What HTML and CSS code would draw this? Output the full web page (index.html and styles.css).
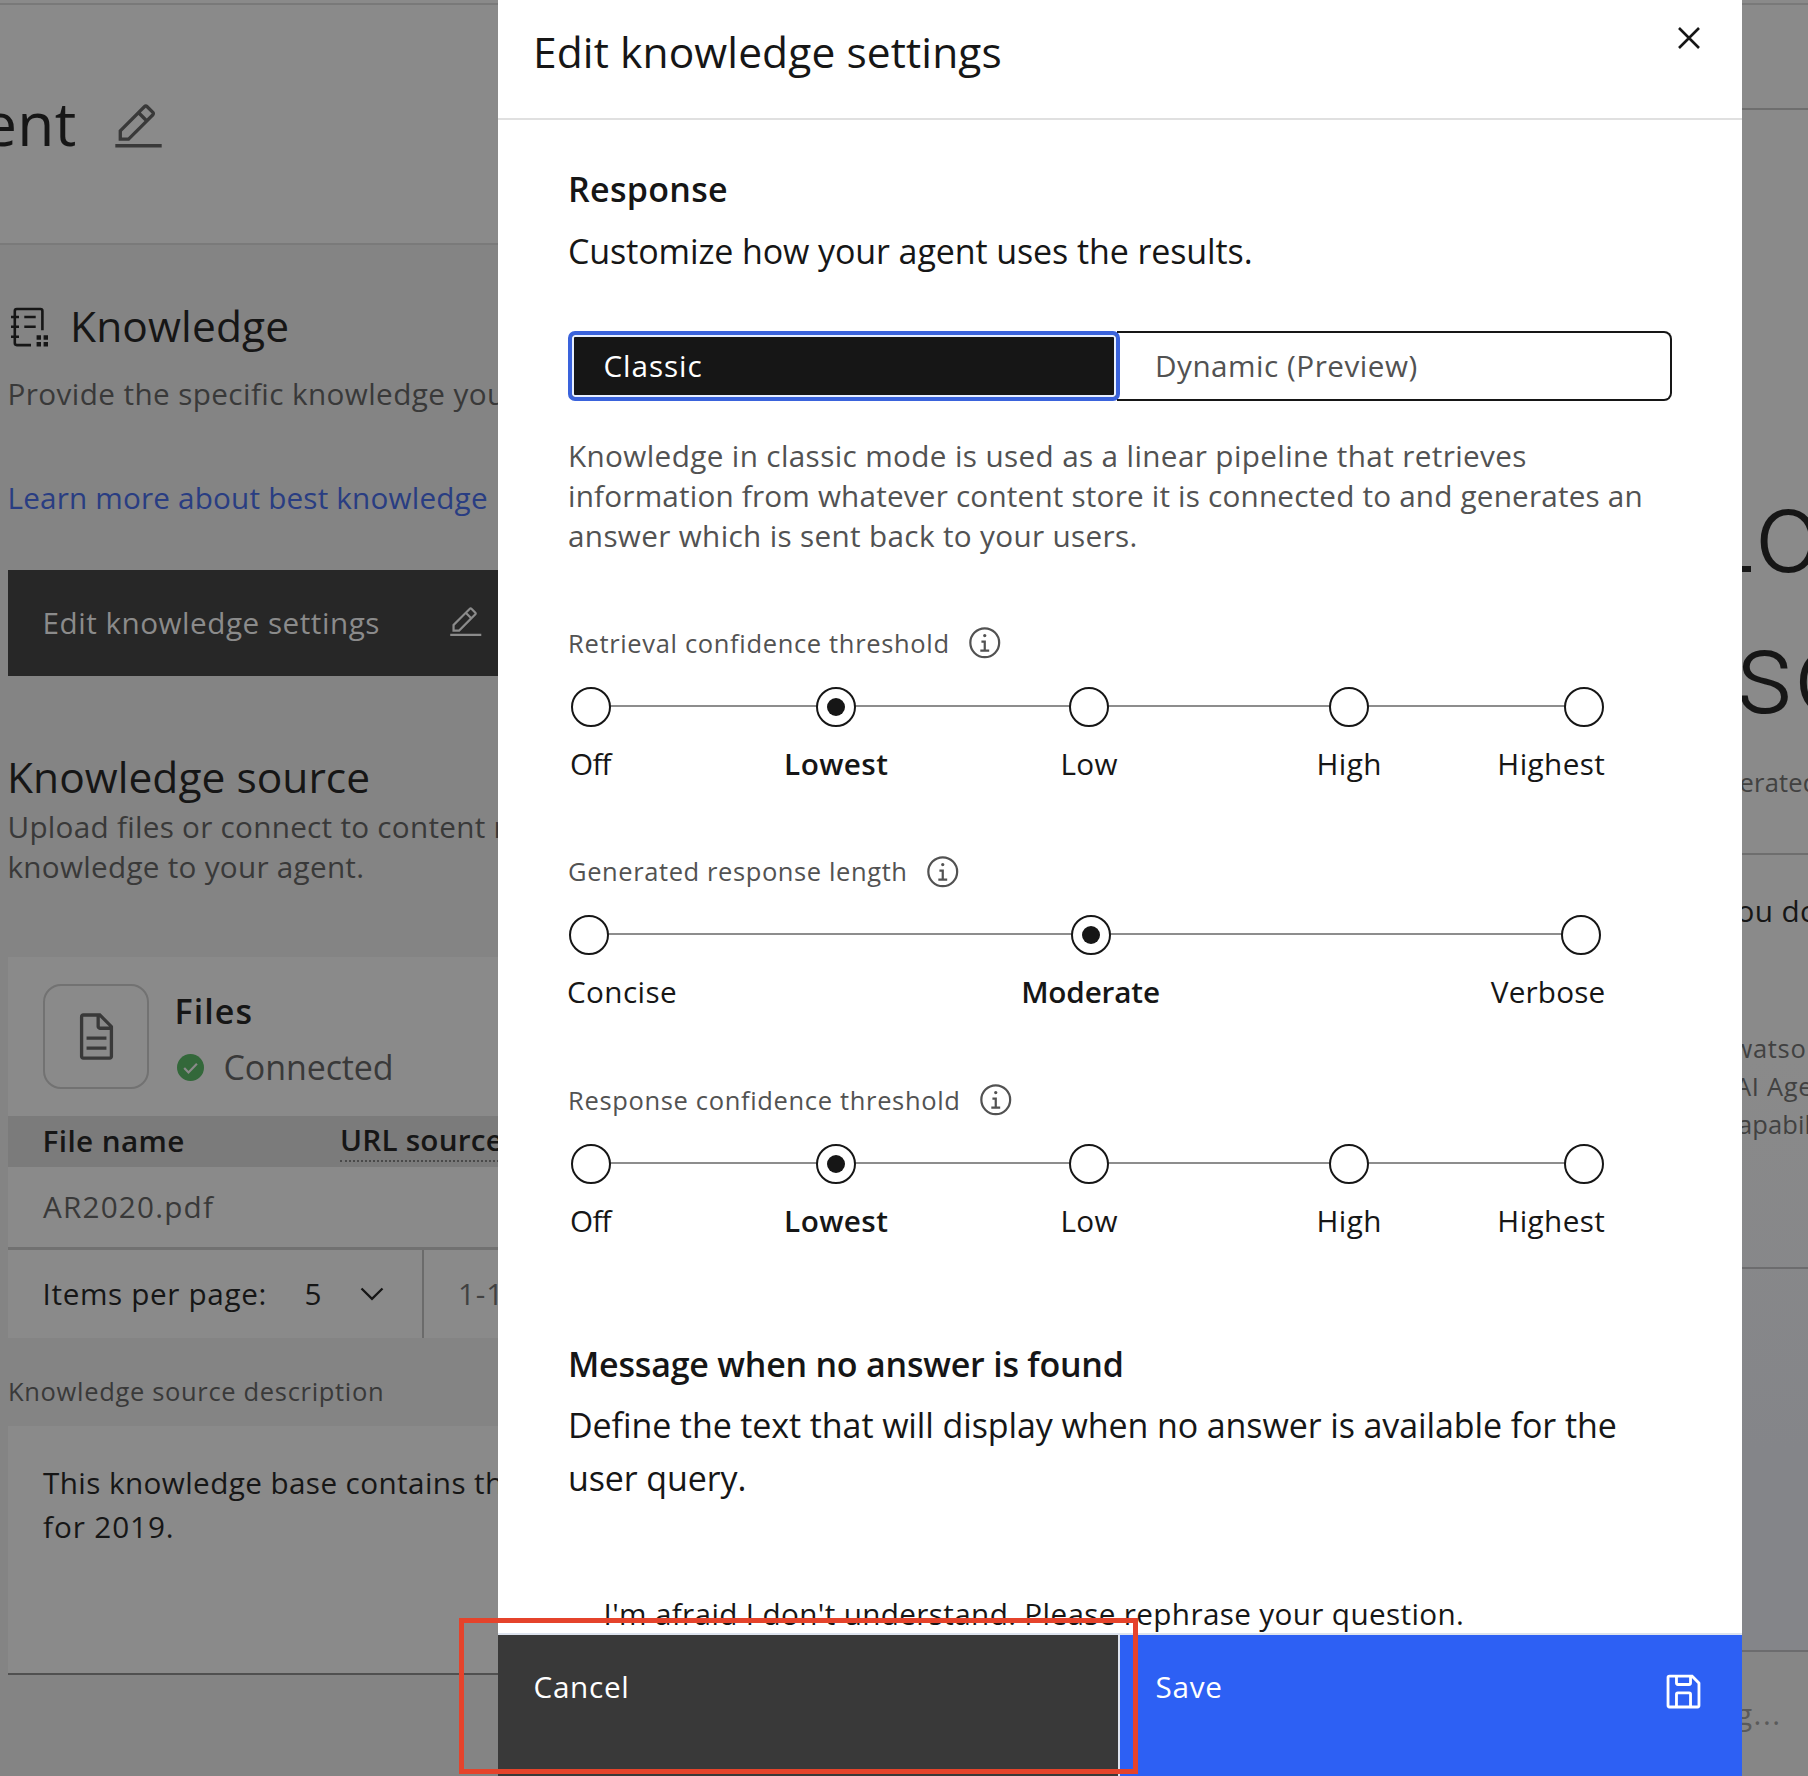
FILE: index.html
```
<!DOCTYPE html>
<html lang="en">
<head>
<meta charset="utf-8">
<title>Edit knowledge settings</title>
<link rel="stylesheet" href="styles.css">
</head>
<body>
<svg class="sprite" aria-hidden="true">
  <symbol id="i-edit" viewBox="0 0 32 32"><path d="M2 26h28v2H2zM25.4 9c.8-.8.8-2 0-2.8l-3.6-3.6c-.8-.8-2-.8-2.8 0L4 17.6V24h6.4L25.4 9zm-5-5L24 7.6l-3 3L17.4 7l3-3zM6 22v-3.6l10-10 3.6 3.6-10 10H6z"/></symbol>
  <symbol id="i-info" viewBox="0 0 32 32"><path d="M17 22V14H13V16H15V22H12V24H20V22zM16 8a1.5 1.5 0 1 0 1.5 1.5A1.5 1.5 0 0 0 16 8z"/><path d="M16 30A14 14 0 1 1 30 16 14 14 0 0 1 16 30zm0-26A12 12 0 1 0 28 16 12 12 0 0 0 16 4z"/></symbol>
</svg>
<div class="app">

  <main class="builder">
    <header class="agent">
      <div class="agent-name"><h1>ent</h1></div>
      <svg class="icon-lg"><use href="#i-edit"/></svg>
    </header>
    <section class="knowledge">
      <h2 class="title head"><svg class="notebook" viewBox="0 0 44 44"><path class="outline" d="M23 41.1H8.8a2 2 0 0 1-2-2V7a2 2 0 0 1 2-2h23.6a2 2 0 0 1 2 2v19.3M3 13h8M3 22.7h8M3 32.7h8M16.3 13h11.4M16.3 22.7h11.4"/><path d="M28.6 31.3h4.4v4.4h-4.4zM35.6 31.3h4.4v4.4h-4.4zM28.6 38h4.4v4.4h-4.4zM35.6 38h4.4v4.4h-4.4z"/></svg><span class="w-knowledge">Knowledge</span></h2>
      <p class="provide">Provide the specific knowledge your</p>
      <a class="learn">Learn more about best knowledge</a>
      <div class="edit-btn"><span>Edit knowledge settings</span><svg class="icon-sm"><use href="#i-edit"/></svg></div>
      <h2 class="title source">Knowledge source</h2>
      <p class="upload">Upload files or connect to content r<br>knowledge to your agent.</p>

      <div class="files">
        <div class="files-top">
          <div class="file-tile"><svg class="icon-lg" viewBox="0 0 32 32"><path d="M25.7 9.3l-7-7C18.5 2.1 18.3 2 18 2H8C6.9 2 6 2.9 6 4v24c0 1.1.9 2 2 2h16c1.1 0 2-.9 2-2V10c0-.3-.1-.5-.3-.7zM18 4.4l5.6 5.6H18V4.4zM24 28H8V4h8v6c0 1.1.9 2 2 2h6v16zM10 22h12v2H10zM10 16h12v2H10z"/></svg></div>
          <div class="files-info">
            <h3 class="w-files">Files</h3>
            <div class="status"><svg class="check" viewBox="0 0 27 27"><circle cx="13.5" cy="13.5" r="13.5"/><path class="tick" d="M7.2 14l4.3 4.4 8.4-8.6"/></svg><span>Connected</span></div>
          </div>
        </div>
        <div class="thead"><span class="th-name">File name</span><span class="th-url">URL source</span></div>
        <div class="trow">AR2020.pdf</div>
        <div class="pager">
          <span class="per-page">Items per page:</span><span class="count">5</span>
          <svg class="chevron" viewBox="0 0 24 14"><path d="M1.5 1.5L12 11.8 22.5 1.5"/></svg>
          <span class="range">1-1</span>
        </div>
      </div>

      <label class="desc-label">Knowledge source description</label>
      <div class="desc">This knowledge base contains th<br><span class="year">for 2019.</span></div>
    </section>
  </main>

  <aside class="panel">
    <header class="panel-head">
      <h2 class="title">Edit knowledge settings</h2>
      <svg class="close" viewBox="0 0 24 24"><path d="M2 2l20 20M22 2L2 22"/></svg>
    </header>
    <div class="panel-body">
      <h3 class="w-response">Response</h3>
      <p class="lead">Customize how your agent uses the results.</p>
      <div class="switcher">
        <div class="seg seg-on">Classic</div>
        <div class="seg seg-off">Dynamic (Preview)</div>
      </div>
      <p class="mode-note"><span class="l1">Knowledge in classic mode is used as a linear pipeline that retrieves</span><br><span class="l2">information from whatever content store it is connected to and generates an</span><br><span class="l3">answer which is sent back to your users.</span></p>

      <div class="field">
        <div class="label"><span>Retrieval confidence threshold</span><svg class="icon-sm"><use href="#i-info"/></svg></div>
        <div class="slider five">
          <div class="stop"><i></i><span class="w-off">Off</span></div>
          <div class="stop on"><i></i><span>Lowest</span></div>
          <div class="stop"><i></i><span>Low</span></div>
          <div class="stop"><i></i><span>High</span></div>
          <div class="stop end"><i></i><span>Highest</span></div>
        </div>
      </div>
      <div class="field">
        <div class="label length"><span>Generated response length</span><svg class="icon-sm"><use href="#i-info"/></svg></div>
        <div class="slider three">
          <div class="stop start"><i></i><span>Concise</span></div>
          <div class="stop on"><i></i><span class="w-mod">Moderate</span></div>
          <div class="stop end"><i></i><span>Verbose</span></div>
        </div>
      </div>
      <div class="field">
        <div class="label"><span>Response confidence threshold</span><svg class="icon-sm"><use href="#i-info"/></svg></div>
        <div class="slider five">
          <div class="stop"><i></i><span class="w-off">Off</span></div>
          <div class="stop on"><i></i><span>Lowest</span></div>
          <div class="stop"><i></i><span>Low</span></div>
          <div class="stop"><i></i><span>High</span></div>
          <div class="stop end"><i></i><span>Highest</span></div>
        </div>
      </div>

      <h3 class="message">Message when no answer is found</h3>
      <p class="lead">Define the text that will display when no answer is available for the<br>user query.</p>
      <div class="fallback">I'm afraid I don't understand. Please rephrase your question.</div>
    </div>
    <footer class="actions">
      <div class="btn cancel">Cancel</div>
      <div class="btn save"><span>Save</span><svg class="icon-save" viewBox="0 0 32 32"><path d="M27.71 9.29l-5-5A1 1 0 0 0 22 4H6A2 2 0 0 0 4 6V26a2 2 0 0 0 2 2H26a2 2 0 0 0 2-2V10A1 1 0 0 0 27.71 9.29ZM12 6h8v4H12Zm8 20H12V18h8Zm2 0V18a2 2 0 0 0-2-2H12a2 2 0 0 0-2 2v8H6V6h4v4a2 2 0 0 0 2 2h8a2 2 0 0 0 2-2V6.41l4 4V26Z"/></svg></div>
    </footer>
  </aside>

  <section class="chat">
    <div class="chat-bar"></div>
    <div class="greeting"><div class="g1"><i></i>o</div><div class="g2">so</div></div>
    <p class="generated">erated</p>
    <div class="prompt">ou do</div>
    <div class="prompt-note"><p class="n1">watso</p><p class="n2">AI Age</p><p class="n3">apabil</p></div>
    <div class="chat-space"></div>
    <div class="chat-input">g...</div>
  </section>
</div>
<div class="highlight"></div>
</body>
</html>
```
FILE: styles.css
```
* { box-sizing: border-box; }
body { margin: 0; font-family: "Open Sans", "Noto Sans", sans-serif; font-size: 29.7px; line-height: 40px; color: #161616; letter-spacing: .4px; }
h1, h2, h3, p { margin: 0; }
.sprite { position: absolute; width: 0; height: 0; }
svg { fill: currentColor; flex: none; display: block; }
.icon-sm { width: 35.5px; height: 35.5px; }
.icon-lg { width: 53px; height: 53px; }

.app { display: grid; grid-template-columns: 498px 1244px 66px; width: 1808px; height: 1776px; overflow: hidden; }
.title { font-size: 42.5px; font-weight: 400; line-height: 60px; letter-spacing: .1px; }
h3 { font-size: 34px; font-weight: 600; line-height: 50px; letter-spacing: .3px; }

/* Page behind the side panel */
.builder { overflow: hidden; white-space: nowrap; background: #848484; }
.agent { display: flex; height: 245px; padding-top: 78px; border-bottom: 2px solid #7a7a7a; background: linear-gradient(#8a8a8a 3px, #797979 3px 5px, #8a8a8a 5px); color: #393939; }
.agent-name { display: flex; justify-content: flex-end; width: 76.5px; height: 80px; margin: 5px 35.2px 0 0; overflow: hidden; color: #161616; }
h1 { font-size: 60.5px; font-weight: 400; line-height: 80px; letter-spacing: .3px; }
.agent .icon-lg { margin-top: 22.5px; }

.knowledge { padding-left: 8px; }
.head { display: flex; align-items: center; margin-top: 50.5px; gap: 18px; }
.notebook { width: 44px; height: 44px; }
.outline { fill: none; stroke: currentColor; stroke-width: 2.6; }
.w-knowledge { letter-spacing: .13px; }
.provide { margin: 18px 0 0 -.5px; color: #393939; }
.learn { display: block; margin: 64px 0 0 -.5px; color: #293d82; letter-spacing: .18px; }
.edit-btn { display: flex; align-items: center; height: 106px; margin-top: 52.5px; padding-left: 34.5px; background: #272727; color: #8b8b8b; }
.edit-btn span { width: 405.3px; letter-spacing: .5px; }
.source { height: 50px; margin: 75.5px 0 0 -1px; line-height: 50px; letter-spacing: .03px; }
.upload { margin: 5.75px 0 70.25px -.5px; line-height: 39.5px; letter-spacing: .27px; color: #393939; }

.files { background: #8a8a8a; }
.files-top { display: flex; height: 159px; padding: 27px 0 0 35px; gap: 25.5px; }
.file-tile { display: flex; align-items: center; justify-content: center; width: 106px; height: 105.5px; border: 2px solid #727272; border-radius: 18px; color: #393939; }
.files-info { padding-top: 2px; }
.w-files { letter-spacing: 1.1px; }
.status { display: flex; align-items: center; height: 50px; margin-top: 6.5px; padding-left: 2.5px; gap: 19.5px; font-size: 34px; letter-spacing: -.1px; color: #393939; }
.check { width: 27px; height: 27px; fill: #33683a; }
.tick { fill: none; stroke: #8a8a8a; stroke-width: 2.2; }
.thead { display: flex; align-items: center; height: 51.5px; padding-left: 34.5px; background: #7b7b7b; font-weight: 600; }
.thead span { flex: none; }
.th-name { width: 297.5px; }
.th-url { height: 41px; line-height: 38px; border-bottom: 2px dotted #4a4a4a; letter-spacing: .2px; }
.trow { height: 82.5px; padding-left: 35px; line-height: 79px; border-bottom: 3px solid #717171; color: #393939; letter-spacing: 1.2px; }
.pager { display: flex; align-items: center; height: 88.8px; padding-left: 34.5px; }
.pager span { flex: none; }
.per-page { width: 262px; letter-spacing: .64px; }
.count { width: 55px; }
.chevron { width: 24px; height: 14px; margin-right: 38.5px; fill: none; stroke: #161616; stroke-width: 2.3; }
.range { height: 88.8px; padding-left: 34px; line-height: 88px; border-left: 2px solid #6b6b6b; color: #414141; letter-spacing: .9px; }
.desc-label { display: block; margin: 34.3px 0 17.6px 0; font-size: 25.5px; line-height: 36px; letter-spacing: .67px; color: #393939; }
.desc { height: 248.5px; padding: 35px 0 0 35px; border-bottom: 2px solid #505050; background: #8a8a8a; line-height: 43.6px; }
.year { letter-spacing: .9px; }

/* Side panel */
.panel { display: flex; flex-direction: column; height: 1776px; background: #fff; white-space: nowrap; }
.panel-head { display: flex; justify-content: space-between; height: 120px; padding: 22.4px 41.5px 0 35px; border-bottom: 2px solid #e0e0e0; }
.close { width: 24px; height: 24px; margin-top: 3.6px; stroke: #161616; stroke-width: 2.6; }
.panel-body { height: 1513px; padding: 43.8px 70.4px 0 70px; overflow: hidden; }
.lead { margin-top: 11px; font-size: 34px; line-height: 53px; letter-spacing: -.1px; }
.switcher { display: grid; grid-template-columns: 551.5px 1fr; height: 70px; margin-top: 53.2px; }
.seg { display: flex; align-items: center; }
.seg-on { padding-left: 31.5px; border: 4px solid #3a63dc; border-radius: 7px; background: #161616; box-shadow: inset 0 0 0 2px #e8f0ff; color: #fff; letter-spacing: .92px; }
.seg-off { margin-left: -3px; padding-left: 38.5px; border: 2px solid #161616; border-left: 0; border-radius: 0 8px 8px 0; color: #525252; letter-spacing: .5px; }
.mode-note { margin-top: 34.9px; line-height: 40px; color: #525252; }
.l1 { letter-spacing: .37px; }
.l2 { letter-spacing: .19px; }
.l3 { letter-spacing: .34px; }

.field { height: 228.5px; }
.mode-note + .field { margin-top: 69.1px; }
.label { display: flex; align-items: center; height: 36px; gap: 17.5px; font-size: 25.5px; letter-spacing: .66px; color: #525252; }
.length { letter-spacing: .6px; }
.slider { display: flex; margin-top: 25.7px; background: linear-gradient(#8d8d8d, #8d8d8d) no-repeat 20px 18px / 992px 2px; }
.five { margin-left: 2.7px; }
.five .stop:nth-child(2) { margin-left: 205px; }
.five .stop:nth-child(3) { margin-left: 213px; }
.five .stop:nth-child(4) { margin-left: 220px; }
.five .stop:nth-child(5) { margin-left: 195.6px; }
.three { margin-left: 1px; }
.three .stop:nth-child(2) { margin-left: 461.5px; }
.three .stop:nth-child(3) { margin-left: 450px; }
.stop { display: flex; flex: none; flex-direction: column; align-items: center; width: 40px; }
.stop i { display: flex; align-items: center; justify-content: center; width: 40px; height: 40px; border: 2px solid #161616; border-radius: 50%; background: #fff; }
.stop span { margin: 17.2px 0 0 1px; }
.stop.on span { font-weight: 600; }
.stop.on i::after { content: ""; width: 18px; height: 18px; border-radius: 50%; background: #161616; }
.stop.end { align-items: flex-end; }
.end span { margin-right: -1px; }
.stop.start { align-items: flex-start; }
.start span { margin-left: -2px; }
.three .end span { margin-right: -5px; letter-spacing: .2px; }
.stop .w-off { margin-left: -.5px; letter-spacing: -.8px; }
.stop .w-mod { margin-left: 0; letter-spacing: -.15px; }

.message { margin-top: 28.2px; letter-spacing: -.22px; }
.message + .lead { margin-top: 10.5px; }
.fallback { margin: 89px 0 0 35.5px; letter-spacing: .35px; }

.actions { display: grid; grid-template-columns: 620px 1fr; flex: 1; border-top: 2px solid #dde3ee; color: #fff; }
.btn { display: flex; justify-content: space-between; padding: 32px 36px 0 35.5px; }
.cancel { background: #393939; letter-spacing: .7px; }
.save { border-left: 2px solid #dde3ee; background: #2d60f4; letter-spacing: .7px; }
.icon-save { width: 45px; height: 45px; margin-top: 2px; }

/* Preview chat */
.chat { overflow: hidden; background: linear-gradient(#8a8a8a 1060px, #848589 1450px); white-space: nowrap; }
.chat-bar { height: 110px; border-bottom: 2px solid #6e6e6e; background: linear-gradient(#8a8a8a 3px, #797979 3px 5px, #8a8a8a 5px); }
.greeting { height: 282px; margin-top: 352px; font: 300 117px/141px Roboto, sans-serif; }
.g1 i { display: inline-block; width: 8.5px; height: 6px; margin-right: 5px; background: #161616; }
.g2 { margin-left: -7px; }
.generated { margin: 20px 0 0 -2.5px; font-size: 25.5px; line-height: 36px; letter-spacing: .2px; color: #414141; }
.prompt { height: 78px; margin-top: 53px; padding: 36px 0 0; border-top: 2px solid #6e6e6e; text-indent: -5.5px; }
.prompt-note { height: 238px; margin-top: 97.6px; font-size: 25.5px; line-height: 38px; letter-spacing: .7px; color: #414141; }
.n1 { margin-left: -9.5px; }
.n2 { margin-left: -7px; }
.n3 { margin-left: -4px; letter-spacing: .1px; }
.chat-space { height: 383px; border-top: 2px solid #6c6c6e; }
.chat-input { height: 130px; padding-top: 42px; border-top: 2px solid #6c6c6e; background: #868686; text-indent: -6px; letter-spacing: 1.5px; color: #5a5a5a; }

.highlight { position: absolute; left: 459px; top: 1618px; width: 679px; height: 156px; border: 5px solid #e5432b; }
```
